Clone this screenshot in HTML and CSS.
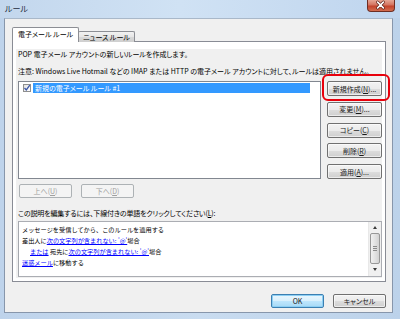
FILE: index.html
```html
<!DOCTYPE html>
<html lang="ja">
<head>
<meta charset="utf-8">
<title>ルール</title>
<link rel="stylesheet" href="styles.css">
</head>
<body>
<div class="window">
  <div class="titlebar">
    <span class="title">ルール</span>
    <div class="close">
      <svg width="28" height="12" viewBox="0 0 28 12"><path d="M11 3 L17 9 M17 3 L11 9" stroke="#5a2018" stroke-width="3" stroke-linecap="round"/><path d="M11 3 L17 9 M17 3 L11 9" stroke="#ffffff" stroke-width="1.6" stroke-linecap="round"/></svg>
    </div>
  </div>
  <div class="frame">
    <div class="body">
      <div class="tabs">
        <div class="tab active">電子メール ルール</div>
        <div class="tab">ニュース ルール</div>
      </div>
      <div class="panel">
        <div class="page">
          <div class="line p1">POP 電子メール アカウントの新しいルールを作成します。</div>
          <div class="line p2">注意: Windows Live Hotmail などの IMAP または HTTP の電子メール アカウントに対して、ルールは適用されません。</div>
          <div class="rules">
            <div class="list">
              <div class="item">
                <span class="check"><svg width="8" height="8" viewBox="0 0 8 8"><path d="M1.5 4 L3.3 6 L6.8 1.2" fill="none" stroke="#3a56a8" stroke-width="1.3"/></svg></span>
                <span class="item-label">新規の電子メール ルール #1</span>
              </div>
            </div>
            <div class="side">
              <div class="btn new">新規作成(<u>N</u>)...<span class="mark"></span></div>
              <div class="btn">変更(<u>M</u>)...</div>
              <div class="btn">コピー(<u>C</u>)</div>
              <div class="btn">削除(<u>R</u>)</div>
              <div class="btn">適用(<u>A</u>)...</div>
            </div>
          </div>
          <div class="moves">
            <div class="btn disabled">上へ(<u>U</u>)</div>
            <div class="btn disabled">下へ(<u>D</u>)</div>
          </div>
          <div class="line label">この説明を編集するには、下線付きの単語をクリックしてください(<u>L</u>):</div>
          <div class="desc">
            <div class="desc-text">
              <div class="dl">メッセージを受信してから、このルールを適用する</div>
              <div class="dl">差出人に<a class="lnk">次の文字列が含まれない: '@'</a>場合</div>
              <div class="dl indent"><a class="lnk">または</a> 宛先に<a class="lnk">次の文字列が含まれない: '@'</a>場合</div>
              <div class="dl"><a class="lnk">迷惑メール</a>に移動する</div>
            </div>
            <div class="scroll">
              <div class="arrow up"></div>
              <div class="thumb"><span class="grip"></span></div>
              <div class="arrow down"></div>
            </div>
          </div>
        </div>
      </div>
      <div class="footer">
        <div class="btn ok">OK</div>
        <div class="btn">キャンセル</div>
      </div>
    </div>
  </div>
</div>
</body>
</html>
```
FILE: styles.css
```css
html, body {
  margin: 0;
  padding: 0;
}
body {
  width: 400px;
  height: 319px;
  overflow: hidden;
  font-family: "Noto Sans CJK JP", "Noto Sans", sans-serif;
  font-size: 7px;
  font-feature-settings: "palt";
  color: #000;
}
.window {
  width: 400px;
  height: 319px;
  display: flex;
  flex-direction: column;
  background: linear-gradient(to right, #bed3eb 0%, #c9dcf0 50%, #bcd2ea 100%);
}
.titlebar {
  height: 18px;
  display: flex;
  justify-content: space-between;
  align-items: flex-start;
  padding-left: 5px;
  padding-right: 5px;
  box-sizing: border-box;
  background: linear-gradient(to right, #c3d7ed 0%, #d0e2f4 45%, #bfd5ee 100%);
}
.title {
  font-size: 8px;
  line-height: 18px;
  color: #1e2c3c;
}
.close {
  width: 28px;
  height: 12px;
  box-sizing: border-box;
  border: 1px solid #6e2d22;
  border-top: none;
  border-radius: 0 0 4px 4px;
  background: linear-gradient(to bottom, #e5a695 0%, #d4735f 45%, #c3422b 55%, #d36d4f 100%);
  display: flex;
}
.close svg {
  margin: -1px 0 0 -1px;
}
.frame {
  flex: 1;
  display: flex;
  padding: 0 7px 6px 4px;
}
.body {
  flex: 1;
  display: flex;
  flex-direction: column;
  background: #f0f0f0;
  border: 1px solid #8796ab;
  border-top: 1px solid #a9b8c9;
  padding: 8px 6px 0 7px;
}
.tabs {
  display: flex;
  align-items: flex-end;
  margin-bottom: -1px;
  position: relative;
  z-index: 1;
}
.tab {
  height: 10px;
  line-height: 10px;
  padding: 0 4px 0 4px;
  border: 1px solid #8c8e94;
  border-bottom: none;
  background: linear-gradient(to bottom, #f2f2f2 0%, #e5e5e5 50%, #d8d8d8 51%, #cfcfcf 100%);
  border-radius: 2px 2px 0 0;
  margin-left: -1px;
  white-space: nowrap;
}
.tab.active {
  height: 14px;
  line-height: 13px;
  background: #ffffff;
  margin-left: 0;
  padding: 0 5px 0 5px;
}
.panel {
  height: 241px;
  box-sizing: border-box;
  margin-right: 0;
  border: 1px solid #898c95;
  background: #ffffff;
  padding: 7px 3px 3px 3px;
  display: flex;
}
.page {
  flex: 1;
  background: #f0f0f0;
  padding-left: 2px;
  display: flex;
  flex-direction: column;
}
.line {
  height: 10px;
  line-height: 10px;
  white-space: nowrap;
  overflow: hidden;
}
.p2 {
  margin-top: 7px;
}
.rules {
  margin-top: 5px;
  display: flex;
  align-items: flex-start;
}
.list {
  width: 303px;
  height: 98px;
  box-sizing: border-box;
  border: 1px solid #828790;
  background: #ffffff;
  padding: 1px 0 0 4px;
}
.item {
  display: flex;
  align-items: center;
  height: 10px;
}
.check {
  width: 8px;
  height: 8px;
  box-sizing: border-box;
  border: 1px solid #8f8f8f;
  background: linear-gradient(to bottom right, #e2e2e2, #ffffff);
  display: flex;
  margin-right: 2px;
}
.check svg {
  margin: -1px;
}
.item-label {
  width: 275px;
  height: 10px;
  line-height: 10px;
  background: #3399ff;
  color: #ffffff;
  padding-left: 2px;
  white-space: nowrap;
}
.side {
  margin-left: 6px;
  width: 55px;
  display: flex;
  flex-direction: column;
  gap: 5.75px;
}
.btn {
  height: 15px;
  box-sizing: border-box;
  border: 1px solid #707070;
  border-radius: 2px;
  background: linear-gradient(to bottom, #f2f2f2 0%, #ebebeb 50%, #dddddd 51%, #cfcfcf 100%);
  box-shadow: inset 0 0 0 1px rgba(255, 255, 255, 0.6);
  display: flex;
  align-items: center;
  justify-content: center;
  line-height: 10px;
  white-space: nowrap;
  color: #1a1a1a;
  position: relative;
}
.btn u {
  text-decoration: underline;
  text-underline-offset: 1px;
}
.mark {
  position: absolute;
  left: -6px;
  top: -8px;
  width: 68px;
  height: 27px;
  box-sizing: border-box;
  border: 2.5px solid #e8000b;
  border-radius: 6px;
}
.moves {
  margin-top: 5px;
  margin-left: 1px;
  display: flex;
  gap: 9px;
}
.moves .btn {
  width: 53px;
  height: 14px;
}
.btn.disabled {
  border-color: #adb2b5;
  background: #f4f4f4;
  box-shadow: none;
  color: #a0a0a0;
}
.label {
  margin-top: 10px;
  letter-spacing: -0.15px;
}
.desc {
  margin-top: 3px;
  height: 56px;
  box-sizing: border-box;
  border: 1px solid #abadb3;
  border-left-color: #a5a8ae;
  background: #ffffff;
  display: flex;
}
.desc-text {
  flex: 1;
  padding: 2px 0 0 3px;
  font-size: 6.2px;
  font-feature-settings: normal;
}
.dl {
  height: 11px;
  line-height: 11px;
  white-space: nowrap;
}
.dl.indent {
  padding-left: 8px;
}
.lnk {
  color: #0000ff;
  text-decoration: underline;
  text-underline-offset: 1px;
}
.scroll {
  width: 12px;
  background: #f0f0f0;
  display: flex;
  flex-direction: column;
  align-items: center;
  border-left: 1px solid #e8e8e8;
}
.arrow {
  width: 0;
  height: 0;
  border-left: 2.5px solid transparent;
  border-right: 2.5px solid transparent;
}
.arrow.up {
  margin-top: 4px;
  border-bottom: 3px solid #3a3a3a;
}
.arrow.down {
  margin-top: 4px;
  border-top: 3px solid #3a3a3a;
}
.thumb {
  margin-top: 4px;
  width: 10px;
  height: 31px;
  box-sizing: border-box;
  border: 1px solid #979797;
  border-radius: 2px;
  background: linear-gradient(to right, #f0f0f0 0%, #e2e2e2 50%, #d2d2d2 100%);
  display: flex;
  align-items: center;
  justify-content: center;
}
.grip {
  width: 4px;
  height: 6px;
  background: repeating-linear-gradient(to bottom, #8a8a8a 0, #8a8a8a 1px, transparent 1px, transparent 2px);
}
.footer {
  padding-top: 12px;
  display: flex;
  justify-content: flex-end;
  gap: 9px;
}
.footer .btn {
  width: 53px;
  height: 14px;
}
.btn.ok {
  border-color: #3c7fb1;
  background: linear-gradient(to bottom, #eaf6fd 0%, #d9f0fc 50%, #bee6fd 51%, #a7d9f5 100%);
  box-shadow: inset 0 0 0 1px #8ccff4;
}
```
